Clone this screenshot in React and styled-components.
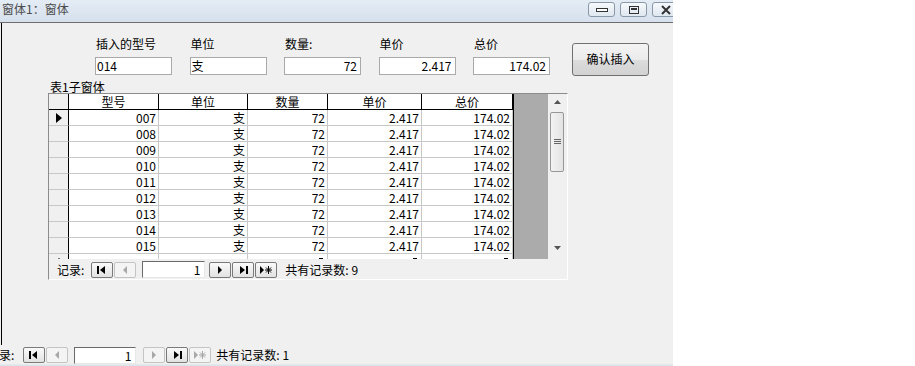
import styled, { createGlobalStyle } from 'styled-components'

const GlobalStyle = createGlobalStyle`
  html, body {
    margin: 0;
    padding: 0;
    background: #fff;
  }
  body {
    font-family: "Noto Sans CJK SC", "DejaVu Sans", sans-serif;
    font-size: 12px;
    color: #000;
  }
`

const rows = ['007', '008', '009', '010', '011', '012', '013', '014', '015']

const fields = [
  { label: '插入的型号', value: '014' },
  { label: '单位', value: '支' },
  { label: '数量:', value: '72', num: true },
  { label: '单价', value: '2.417', num: true },
  { label: '总价', value: '174.02', num: true },
]

function NavIcon({ kind, disabled }) {
  const c = disabled ? '#a8a8a8' : '#000'
  return (
    <svg width="14" height="10" viewBox="0 0 14 10">
      {kind === 'first' && (
        <>
          <rect x="2" y="1" width="2" height="8" fill={c} />
          <path d="M10 1 L5 5 L10 9 Z" fill={c} />
        </>
      )}
      {kind === 'prev' && <path d="M9 1 L5 5 L9 9 Z" fill={c} />}
      {kind === 'next' && <path d="M5 1 L9 5 L5 9 Z" fill={c} />}
      {kind === 'last' && (
        <>
          <path d="M4 1 L9 5 L4 9 Z" fill={c} />
          <rect x="10" y="1" width="2" height="8" fill={c} />
        </>
      )}
      {kind === 'new' && (
        <>
          <path d="M1 1 L5 5 L1 9 Z" fill={c} />
          <path
            d="M9.5 1 V9 M6 5 H13 M7 2.5 L12 7.5 M12 2.5 L7 7.5"
            stroke={c}
            strokeWidth="1"
          />
        </>
      )}
    </svg>
  )
}

function RecordNav({ count, dis, input, gaps, offset }) {
  return (
    <NavBar>
      <NavText style={{ marginLeft: offset }}>记录:</NavText>
      <NavBtn $disabled={dis.first} style={{ marginLeft: gaps[0] }}>
        <NavIcon kind="first" disabled={dis.first} />
      </NavBtn>
      <NavBtn $disabled={dis.prev}>
        <NavIcon kind="prev" disabled={dis.prev} />
      </NavBtn>
      <NavInput style={{ width: input, marginLeft: gaps[1] }}>1</NavInput>
      <NavBtn $disabled={dis.next} style={{ marginLeft: gaps[2] }}>
        <NavIcon kind="next" disabled={dis.next} />
      </NavBtn>
      <NavBtn $disabled={dis.last}>
        <NavIcon kind="last" disabled={dis.last} />
      </NavBtn>
      <NavBtn $disabled={dis.new}>
        <NavIcon kind="new" disabled={dis.new} />
      </NavBtn>
      <NavText style={{ marginLeft: gaps[3] }}>共有记录数: {count}</NavText>
    </NavBar>
  )
}

export default function App() {
  return (
    <>
      <GlobalStyle />
      <Window>
        <TitleBar>
          <Title>窗体1：窗体</Title>
          <Controls>
            <CtrlBtn>
              <svg width="12" height="6" viewBox="0 0 12 6">
                <rect x="0.5" y="1.5" width="11" height="3" fill="#fff" stroke="#333" />
              </svg>
            </CtrlBtn>
            <CtrlBtn>
              <svg width="12" height="10" viewBox="0 0 12 10">
                <rect x="1.5" y="1.5" width="9" height="7" fill="none" stroke="#333" />
                <rect x="3" y="3" width="6" height="2" fill="#333" />
              </svg>
            </CtrlBtn>
            <CtrlBtn>
              <svg width="12" height="10" viewBox="0 0 12 10">
                <path d="M2 1 L10 9 M10 1 L2 9" stroke="#333" strokeWidth="2" />
              </svg>
            </CtrlBtn>
          </Controls>
        </TitleBar>
        <Body>
          <Detail>
            <TopRow>
              <Fields>
                {fields.map((f) => (
                  <Field key={f.label}>
                    <FieldLabel>{f.label}</FieldLabel>
                    <TextBox $num={f.num}>{f.value}</TextBox>
                  </Field>
                ))}
              </Fields>
              <InsertBtn>确认插入</InsertBtn>
            </TopRow>
            <SubLabel>表1子窗体</SubLabel>
            <Subform>
              <SheetArea>
                <Sheet>
                  <Row>
                    <Sel $head />
                    <HeadCell>型号</HeadCell>
                    <HeadCell>单位</HeadCell>
                    <HeadCell>数量</HeadCell>
                    <HeadCell>单价</HeadCell>
                    <HeadCell>总价</HeadCell>
                  </Row>
                  {rows.map((r, i) => (
                    <Row key={r}>
                      <Sel>
                        {i === 0 && (
                          <svg width="8" height="10" viewBox="0 0 8 10">
                            <path d="M1 0 L7 5 L1 10 Z" fill="#000" />
                          </svg>
                        )}
                      </Sel>
                      <Cell>{r}</Cell>
                      <Cell>支</Cell>
                      <Cell>72</Cell>
                      <Cell>2.417</Cell>
                      <Cell>174.02</Cell>
                    </Row>
                  ))}
                  <Row>
                    <Sel>
                      <svg width="8" height="8" viewBox="0 0 8 8">
                        <path d="M4 0 V8 M0 4 H8 M1 1 L7 7 M7 1 L1 7" stroke="#000" />
                      </svg>
                    </Sel>
                    <Cell />
                    <Cell />
                    <Cell $mark />
                    <Cell $mark />
                    <Cell $mark />
                  </Row>
                </Sheet>
                <Blank />
                <ScrollBar>
                  <ScrollArrow>
                    <svg width="7" height="4" viewBox="0 0 7 4">
                      <path d="M0 4 L3.5 0 L7 4 Z" fill="#555" />
                    </svg>
                  </ScrollArrow>
                  <Thumb>
                    <svg width="7" height="6" viewBox="0 0 7 6">
                      <path d="M0 0.5 H7 M0 2.5 H7 M0 4.5 H7" stroke="#666" />
                    </svg>
                  </Thumb>
                  <ScrollArrow $bottom>
                    <svg width="7" height="4" viewBox="0 0 7 4">
                      <path d="M0 0 L3.5 4 L7 0 Z" fill="#555" />
                    </svg>
                  </ScrollArrow>
                </ScrollBar>
              </SheetArea>
              <SubNav>
                <RecordNav
                  count={9}
                  dis={{ prev: true }}
                  input={63}
                  offset={8}
                  gaps={[6, 5, 3, 7]}
                />
              </SubNav>
            </Subform>
          </Detail>
          <BottomNav>
            <RecordNav
              count={1}
              dis={{ prev: true, next: true, new: true }}
              input={62}
              offset={-13}
              gaps={[8, 5, 6, 4]}
            />
          </BottomNav>
        </Body>
        <StatusLine />
      </Window>
    </>
  )
}

const Window = styled.div`
  width: 673px;
  height: 366px;
  display: flex;
  flex-direction: column;
  overflow: hidden;
  background: #f0f0f0;
`

const TitleBar = styled.div`
  height: 22px;
  flex: none;
  display: flex;
  align-items: center;
  justify-content: space-between;
  overflow: hidden;
  background: linear-gradient(#e4ecf5, #d6e1ed);
  border-bottom: 1px solid #6d6d6d;
`

const Title = styled.div`
  padding-left: 2px;
  font-size: 12px;
  color: #4a4a4a;
  line-height: 14px;
  margin-top: -4px;
`

const Controls = styled.div`
  display: flex;
  gap: 5px;
  margin-right: -6px;
  margin-top: -3px;
`

const CtrlBtn = styled.div`
  width: 27px;
  height: 15px;
  display: flex;
  align-items: center;
  justify-content: center;
  box-sizing: border-box;
  border: 1px solid #8a97a6;
  border-radius: 3px;
  background: linear-gradient(#f6f9fc, #dfe7f0);
`

const Body = styled.div`
  flex: 1;
  display: flex;
  flex-direction: column;
`

const Detail = styled.div`
  height: 322px;
  flex: none;
  margin-left: 1px;
  border-left: 1px solid #000;
  box-sizing: border-box;
`

const TopRow = styled.div`
  display: flex;
  align-items: flex-start;
  padding: 14px 0 0 93px;
`

const Fields = styled.div`
  display: flex;
  gap: 17.5px;
`

const Field = styled.div`
  display: flex;
  flex-direction: column;
  gap: 6px;
`

const FieldLabel = styled.div`
  height: 14px;
  line-height: 14px;
  padding-left: 1px;
`

const TextBox = styled.div`
  width: 77px;
  height: 18px;
  box-sizing: border-box;
  border: 1px solid #a9a9a9;
  background: #fff;
  line-height: 16px;
  padding: 0 3px 0 1px;
  text-align: ${(p) => (p.$num ? 'right' : 'left')};
  font-size: 12px;
`

const InsertBtn = styled.div`
  width: 77px;
  height: 33px;
  margin: 6px 0 0 22px;
  box-sizing: border-box;
  border: 1px solid #707070;
  border-radius: 3px;
  background: linear-gradient(#f4f4f4 0%, #ebebeb 50%, #dcdcdc 51%, #d2d2d2 100%);
  display: flex;
  align-items: center;
  justify-content: center;
  padding-bottom: 3px;
`

const SubLabel = styled.div`
  margin: 4px 0 0 48px;
  height: 13px;
  line-height: 13px;
`

const Subform = styled.div`
  margin-left: 46px;
  width: 520px;
  height: 187px;
  box-sizing: border-box;
  border: 1px solid;
  border-color: #8c8c8c #fff #fff #8c8c8c;
  display: flex;
  flex-direction: column;
`

const SheetArea = styled.div`
  height: 166px;
  display: flex;
  overflow: hidden;
`

const Sheet = styled.div`
  display: flex;
  flex-direction: column;
  background: #fff;
`

const Row = styled.div`
  display: grid;
  grid-template-columns: 20px 90px 89px 80px 94px 91px;
  height: 16px;
  flex: none;
`

const Sel = styled.div`
  box-sizing: border-box;
  background: #f0f0f0;
  border-right: 1px solid #000;
  border-bottom: 1px solid ${(p) => (p.$head ? '#000' : '#c8c8c8')};
  display: flex;
  align-items: center;
  justify-content: center;
  line-height: 15px;
`

const HeadCell = styled.div`
  box-sizing: border-box;
  border-right: 1px solid #000;
  border-bottom: 1px solid #000;
  text-align: center;
  line-height: 15px;
  background: #fff;
`

const Cell = styled.div`
  position: relative;
  box-sizing: border-box;
  border-right: 1px solid #c8c8c8;
  border-bottom: 1px solid #c8c8c8;
  text-align: right;
  padding-right: 2px;
  line-height: 15px;
  overflow: hidden;
  white-space: nowrap;

  ${(p) =>
    p.$mark &&
    `
    &::after {
      content: '';
      position: absolute;
      right: 4px;
      top: 4px;
      width: 4px;
      height: 1px;
      background: #000;
    }
  `}
`

const Blank = styled.div`
  width: 35px;
  background: #ababab;
  border-left: 1px solid #000;
  box-sizing: border-box;
`

const ScrollBar = styled.div`
  width: 18px;
  display: flex;
  flex-direction: column;
  align-items: center;
  background: #f0f0f0;
`

const ScrollArrow = styled.div`
  height: 16px;
  display: flex;
  align-items: center;
  justify-content: center;
  margin-top: ${(p) => (p.$bottom ? 'auto' : '0')};
  margin-bottom: ${(p) => (p.$bottom ? '3px' : '0')};
`

const Thumb = styled.div`
  width: 14px;
  height: 60px;
  margin-top: 2px;
  box-sizing: border-box;
  border: 1px solid #979797;
  border-radius: 2px;
  background: linear-gradient(90deg, #f3f3f3, #e3e3e3);
  display: flex;
  align-items: center;
  justify-content: center;
`

const SubNav = styled.div`
  flex: 1;
  display: flex;
  align-items: center;
  background: #f0f0f0;
  border-top: 1px solid #f0f0f0;
`

const NavBar = styled.div`
  display: flex;
  align-items: center;
  height: 19px;
  gap: 1px;
`

const NavText = styled.div`
  white-space: nowrap;
  line-height: 14px;
`

const NavBtn = styled.div`
  width: 22px;
  height: 16px;
  box-sizing: border-box;
  border: 1px solid ${(p) => (p.$disabled ? '#c4c4c4' : '#7a7a7a')};
  border-radius: 2px;
  background: ${(p) => (p.$disabled ? '#f4f4f4' : 'linear-gradient(#fafafa, #e2e2e2)')};
  display: flex;
  align-items: center;
  justify-content: center;
`

const NavInput = styled.div`
  height: 17px;
  box-sizing: border-box;
  background: #fff;
  border: 1px solid;
  border-color: #6a6a6a #e8e8e8 #e8e8e8 #6a6a6a;
  text-align: right;
  padding-right: 4px;
  line-height: 15px;
`

const BottomNav = styled.div`
  margin-top: 1px;
  height: 18px;
  display: flex;
  align-items: center;
`

const StatusLine = styled.div`
  height: 3px;
  flex: none;
  margin-top: auto;
  background: #dae4ef;
  border-top: 1px solid #e8e8e8;
`
